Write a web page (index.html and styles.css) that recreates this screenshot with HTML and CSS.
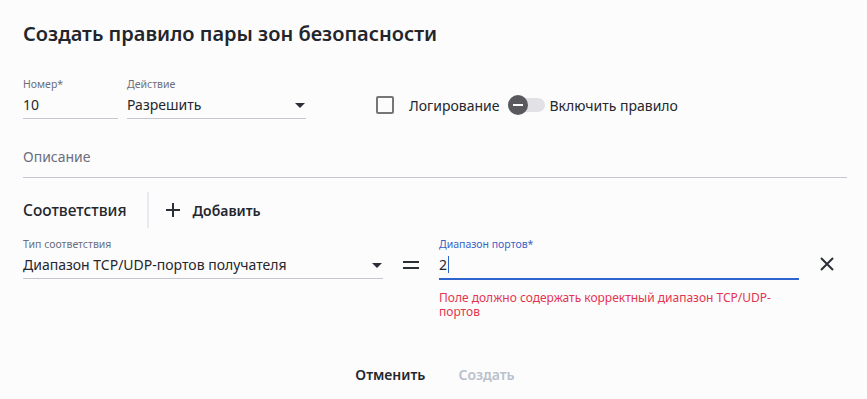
FILE: index.html
```html
<!DOCTYPE html>
<html lang="ru">
<head>
  <meta charset="UTF-8">
  <title>Создать правило пары зон безопасности</title>
  <meta name="viewport" content="width=device-width, initial-scale=1">
  <link rel="stylesheet" href="styles.css">
</head>
<body>

  <div class="dialog">
    <h1>Создать правило пары зон безопасности</h1>

    <div class="row-main">
      <div class="field field-number">
        <div class="label">Номер*</div>
        <div class="value">10</div>
      </div>
      <div class="field field-action">
        <div class="label">Действие</div>
        <div class="value select">Разрешить <span class="arrow"></span></div>
      </div>

      <label class="check">
        <span class="box"></span>
        <span>Логирование</span>
      </label>
      <div class="toggle">
        <span class="track"><span class="thumb"></span></span>
        <span>Включить правило</span>
      </div>
    </div>

    <div class="desc">Описание</div>

    <div class="matches">
      <span class="matches-title">Соответствия</span>
      <span class="divider"></span>
      <button class="add">
        <svg width="14" height="14" viewBox="0 0 14 14"><path d="M7 0v14M0 7h14" stroke="#2b2f38" stroke-width="2"/></svg>
        Добавить
      </button>
    </div>

    <div class="match-row">
      <div class="field field-type">
        <div class="label">Тип соответствия</div>
        <div class="value select">Диапазон TCP/UDP-портов получателя <span class="arrow"></span></div>
      </div>
      <svg class="eq" width="16" height="8" viewBox="0 0 16 8"><path d="M0 1h16M0 7h16" stroke="#2b2f38" stroke-width="2"/></svg>
      <div class="field-port">
        <div class="field focused">
          <div class="label">Диапазон портов*</div>
          <div class="value">2<span class="caret"></span></div>
        </div>
        <div class="error">Поле должно содержать корректный диапазон TCP/UDP-портов</div>
      </div>
      <svg class="remove" width="14" height="14" viewBox="0 0 14 14"><path d="M1 1l12 12M13 1L1 13" stroke="#2b2f38" stroke-width="2"/></svg>
    </div>

    <div class="footer">
      <button class="btn">Отменить</button>
      <button class="btn disabled">Создать</button>
    </div>
  </div>

</body>
</html>
```

FILE: styles.css
```css
body {
  margin: 0;
  background: #fcfcfc;
  font-family: "Noto Sans", "Open Sans", sans-serif;
  color: #24272e;
}

.dialog {
  padding: 20px 20px 0 23px;
}

h1 {
  margin: 0;
  font-size: 20px;
  line-height: 28px;
  font-weight: 600;
  color: #22252b;
}

.row-main {
  display: flex;
  align-items: flex-end;
  margin-top: 29px;
}

.field {
  border-bottom: 1px solid #c6c6d2;
}

.label {
  margin-bottom: 1px;
  font-size: 10.5px;
  line-height: 14px;
  color: #6b6f7c;
}

.value {
  font-size: 14px;
  line-height: 26px;
  color: #24272e;
}

.select {
  display: flex;
  align-items: center;
  justify-content: space-between;
}

.arrow {
  width: 0;
  height: 0;
  border-left: 5px solid transparent;
  border-right: 5px solid transparent;
  border-top: 5px solid #2b2f38;
  margin-right: 1px;
}

.field-number {
  width: 95px;
}

.field-action {
  width: 179px;
  margin-left: 9px;
}

.check {
  display: flex;
  align-items: center;
  gap: 15px;
  height: 26px;
  margin: 0 0 1px 70px;
  font-size: 14px;
}

.box {
  width: 14px;
  height: 14px;
  border: 2px solid #767676;
  border-radius: 2px;
}

.toggle {
  display: flex;
  align-items: center;
  gap: 4px;
  height: 26px;
  margin: 0 0 1px 9px;
  font-size: 14px;
}

.track {
  position: relative;
  width: 35px;
  height: 14px;
  margin-left: 2px;
  border-radius: 7px;
  background: #e2e2e6;
}

.thumb {
  position: absolute;
  left: -2px;
  top: -3px;
  width: 20px;
  height: 20px;
  border-radius: 50%;
  background: #5a5a5e;
}

.thumb::after {
  content: "";
  position: absolute;
  left: 5px;
  top: 9px;
  width: 10px;
  height: 2px;
  background: #fff;
}

.desc {
  margin-top: 25px;
  padding-bottom: 7px;
  border-bottom: 1px solid #c6c6d2;
  font-size: 14px;
  line-height: 26px;
  color: #6b6f7c;
}

.matches {
  display: flex;
  align-items: center;
  height: 36px;
  margin-top: 14px;
}

.matches-title {
  font-size: 15.5px;
  font-weight: 500;
}

.divider {
  width: 2px;
  height: 36px;
  margin: 0 17px 0 20px;
  background: #e9e9ef;
}

.add {
  display: flex;
  align-items: center;
  gap: 13px;
  padding: 0;
  border: 0;
  background: none;
  font-family: inherit;
  font-size: 14px;
  font-weight: 600;
  color: #24272e;
}

.match-row {
  display: flex;
  align-items: flex-start;
  margin-top: 9px;
}

.field-type {
  width: 360px;
}

.eq {
  margin: 24px 20px 0 20px;
}

.field-port {
  width: 360px;
}

.focused {
  border-bottom: 2px solid #2e62cc;
}

.focused .label {
  color: #3a64c6;
}

.caret {
  display: inline-block;
  width: 1px;
  height: 17px;
  margin-left: 1px;
  vertical-align: -3px;
  background: #2e62cc;
}

.error {
  margin-top: 11px;
  font-size: 12px;
  line-height: 14px;
  color: #e4344f;
}

.remove {
  margin: 20px 0 0 21px;
}

.footer {
  display: flex;
  justify-content: center;
  gap: 33px;
  margin-top: 46px;
}

.btn {
  padding: 0;
  border: 0;
  background: none;
  font-family: inherit;
  font-size: 14px;
  font-weight: 600;
  line-height: 20px;
  color: #24272e;
}

.btn.disabled {
  color: #b9c1cd;
}
```
